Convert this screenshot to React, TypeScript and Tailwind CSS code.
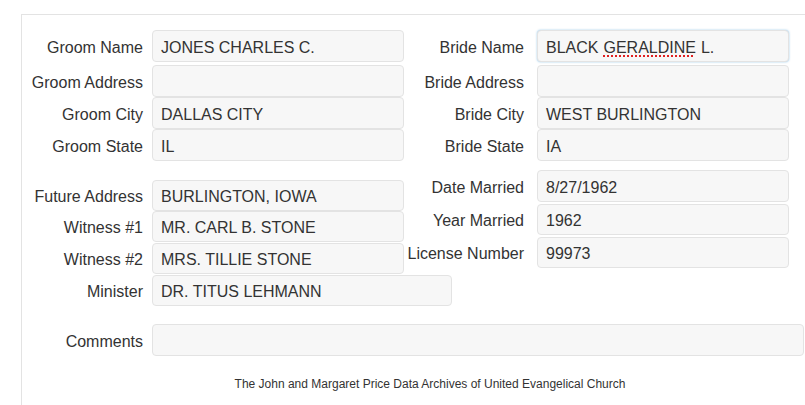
import React from "react";

const inputBase =
  "h-full rounded-[4px] border border-[#e3e3e3] bg-[#f7f7f7] px-2 pt-[3px] flex items-center text-[16px] text-[#333] whitespace-nowrap overflow-hidden";

function LRow({ label, value, mt, h, w = "w-[252px]", lw = "w-[130px]", pr = "pr-[9px]", focus = false, children }: any) {
  return (
    <div className={`flex ${mt} ${h}`}>
      <div className={`${lw} ${pr} pt-[3px] shrink-0 flex items-center justify-end text-[16px] text-[#333] whitespace-nowrap`}>{label}</div>
      <div
        className={`${w} ${inputBase} ${focus ? "border-[#1f8ad2] shadow-[0_0_2px_rgba(31,138,210,0.5)]" : ""}`}
      >
        {children ?? value}
      </div>
    </div>
  );
}

export default function App() {
  return (
    <div className="w-[805px] h-[405px] overflow-hidden bg-white" style={{ fontFamily: '"Liberation Sans", Arial, sans-serif' }}>
      <div className="pt-[14px] pl-[21px]">
        <div className="w-[1000px] h-[400px] border-l border-t border-[#e3e3e3] pt-[15px]">
          {/* Section 1 */}
          <div className="flex">
            <div className="w-[382px]">
              <LRow label="Groom Name" value="JONES CHARLES C." mt="" h="h-[32px]" />
              <LRow label="Groom Address" value="" mt="mt-[3px]" h="h-[32px]" />
              <LRow label="Groom City" value="DALLAS CITY" mt="" h="h-[32px]" />
              <LRow label="Groom State" value="IL" mt="" h="h-[32px]" />
            </div>
            <div className="w-[385px]">
              <LRow label="Bride Name" mt="" h="h-[32px]" lw="w-[133px]" pr="pr-[13px]" focus>
                BLACK{" "}
                <span className="ml-[5px] underline decoration-dotted decoration-[#e02020] decoration-2 underline-offset-[3px]">GERALDINE</span>
                <span className="ml-[5px]">L.</span>
              </LRow>
              <LRow label="Bride Address" value="" mt="mt-[3px]" h="h-[32px]" lw="w-[133px]" pr="pr-[13px]" />
              <LRow label="Bride City" value="WEST BURLINGTON" mt="" h="h-[32px]" lw="w-[133px]" pr="pr-[13px]" />
              <LRow label="Bride State" value="IA" mt="" h="h-[32px]" lw="w-[133px]" pr="pr-[13px]" />
            </div>
          </div>

          {/* Section 2 */}
          <div className="flex">
            <div className="w-[382px] pt-[19px]">
              <LRow label="Future Address" value="BURLINGTON, IOWA" mt="" h="h-[31px]" />
              <LRow label="Witness #1" value="MR. CARL B. STONE" mt="" h="h-[31px]" />
              <LRow label="Witness #2" value="MRS. TILLIE STONE" mt="mt-[1px]" h="h-[31px]" />
              <div className="w-[440px]">
                <LRow label="Minister" value="DR. TITUS LEHMANN" mt="mt-[1px]" h="h-[31px]" w="w-[300px]" />
              </div>
            </div>
            <div className="w-[385px] pt-[9px]">
              <LRow label="Date Married" value="8/27/1962" mt="" h="h-[32px]" lw="w-[133px]" pr="pr-[13px]" />
              <LRow label="Year Married" value="1962" mt="mt-[2px]" h="h-[31px]" lw="w-[133px]" pr="pr-[13px]" />
              <LRow label="License Number" value="99973" mt="mt-[2px]" h="h-[31px]" lw="w-[133px]" pr="pr-[13px]" />
            </div>
          </div>

          {/* Comments */}
          <div className="mt-[18px]">
            <LRow label="Comments" value="" mt="" h="h-[32px]" w="w-[652px]" />
          </div>

          {/* Footer */}
          <div className="w-[816px] text-center text-[12px] text-[#333] mt-[19px]">
            The John and Margaret Price Data Archives of United Evangelical Church
          </div>
        </div>
      </div>
    </div>
  );
}
